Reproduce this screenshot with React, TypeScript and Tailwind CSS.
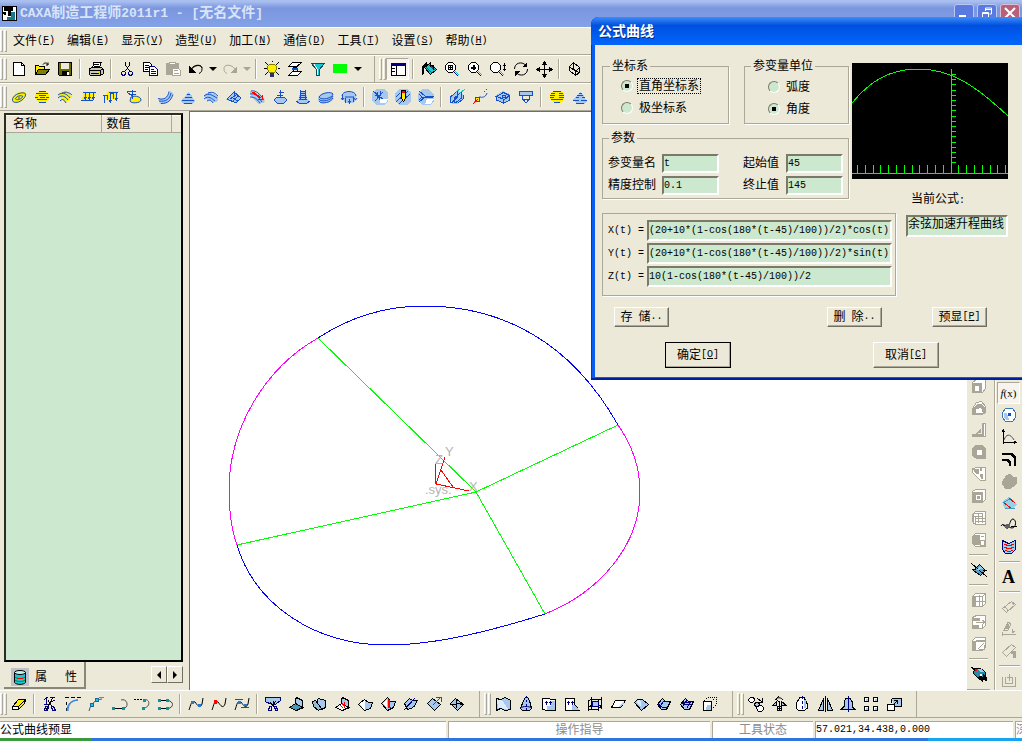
import { Fragment } from "react";
import type { ReactNode } from "react";
import clsx from "clsx";

// [path, stroke, fill] on a 16x16 grid
type Shape = [string, string, string?];

const K = "#000000";
const B = "#1450cc";
const L = "#a6c8ee";
const Y = "#ffee00";
const N = "#000080";
const C = "#18c8d0";
const G = "#a9a698";
const R = "#ff0000";
const W = "#ffffff";

const icons: Record<string, Shape[]> = {
    新建: [["M2.5 1.5h8l3 3v10h-11z", K, W], ["M10.5 1.5v3h3", K]],
    打开: [["M1.5 13.5v-9h3l1 1h5v3", K, Y], ["M1.5 13.5l3-5h11l-4 5z", K, "#808000"], ["M9 3.5c1-2 4-2 5 0m0-2v2.500h-2", K]],
    保存: [["M1.500 1.500h13v13h-12l-1-1z", K, "#6b6b00"], ["M4 2h8v6h-8z", "", "#ece9d8"], ["M5 10h7v4h-7z", "", K], ["M10 11h1.500v3h-1.500z", "", W]],
    打印: [["M4.500 6.500l1.500-5h7l-1.500 5z", K, W], ["M1.500 7.500l3-1h9l2 2v4l-3 2h-10l-1-1z", K, "#c8c6b8"], ["M6 3.500h5M5.500 5.500h5M1.500 9.500h11l3-2M12.500 10v4M3 12.500h8", K], ["M9 11h2v1h-2z", "", Y]],
    剪切: [["M6.500 1v3l4 6M10.500 1v3l-4 6", K], ["M3.500 10.500h2l1 1v1l-1 2h-2l-1-2v-1zM10.500 10.500h2l1 1v1l-1 2h-2l-1-2v-1z", N]],
    复制: [["M1.500 1.500h6l2 2v7h-8z", K, W], ["M3 4.500h4M3 6.500h4M3 8.500h3", K], ["M7.500 5.500h5l3 3v6h-8z", N, W], ["M9 8.500h3M9 10.500h5M9 12.500h5", N]],
    粘贴: [["M1.500 2.500h12v11h-12z", G, G], ["M4.500 1.500h6v2h-6z", G, W], ["M7.500 7.500h6l2 2v5h-8z", G, W], ["M9 9.500h4M9 12.500h5", G]],
    撤消: [["M3 8.500c2-5 11-6 11-1c0 3-1 4-3 5M3 9c3-5 10-6 11-2", K], ["M1 5v7h7z", "", K]],
    重做: [["M13 8.500c-2-5-11-6-11-1c0 3 1 4 3 5", G], ["M15 5v7h-7z", "", G]],
    亮度: [["M1 1l3 3M15 1l-3 3M0 7.500h2.500M13.500 7.500h2.500M1 14l3-3M15 14l-3-3M8 0v1", K], ["M5.500 3.500h5l2 2v3l-2 3h-5l-2-3v-3z", "#808000", Y], ["M6 12h4v4h-4z", "", "#303060"]],
    图层: [["M5.500 1.500h9l-4 4h-9zM5.500 10.500h9l-4 4h-9z", K, W], ["M12 3l-7 8M5 5l6 5", K], ["M5 7h6v1.500h-6z", "", B]],
    过滤: [["M1.500 2.500h13l-5 6v6h-3v-6z", "#104858", C], ["M4 3l3 5v6", W]],
    颜色: [["M0 3h14v9h-14z", "", "#00ff00"]],
    特征树: [["M1.500 2.500h14v12h-14z", K, W], ["M1 2h15v3h-15z", "", N], ["M6.500 5v9M2 7.500h3M2 10.500h3", K]],
    渲染: [["M1 5l5-4v2l-3 3v7l-2 1z", "", K], ["M3.500 6.500l5-4l7 6l-6 5z", K, C], ["M8 4l6 5M5 6l6 6", "#006080"], ["M9 1v5M12 4v5", K]],
    全部: [["M4.500 1.500h4l3 3v4l-3 3h-4l-3-3v-4z", K, W], ["M4 4.500h5M4 6.500h5M4 8.500h5M4.500 4v5M6.500 4v5M8.500 4v5", K], ["M10 11l4 4", N], ["M11 10l4 4", C]],
    放大: [["M4.500 1.500h4l3 3v4l-3 3h-4l-3-3v-4z", K, W], ["M4 6.500h5M6.500 4v5", K], ["M4 7.500h5M7.500 4v5", K], ["M10 11l4 4", N], ["M11 10l4 4", C]],
    缩放: [["M3.500 1.500h4l3 3v4l-3 3h-4l-3-3v-4z", K, W], ["M14.500 2v8M13 4.500h3M13 8.500h3", K], ["M9 11l4 4", N], ["M10 10l4 4", C]],
    旋转: [["M1.500 8c0-6 7-8 11-4M14.500 8c0 6-7 8-11 4", K], ["M14 1v5h-5zM2 15v-5h5z", "", K]],
    平移: [["M8.500 2v13M2 8.500h13", K], ["M8.500 0l3 4h-6zM8.500 17l3-4h-6zM0 8.500l4-3v6zM17 8.500l-4-3v6z", "", K]],
    视图: [["M2.500 5.500l4-4l6 5v5l-4 3l-6-5zM2.500 5.500l6 5v4M8.500 10.500l4-4M6.500 1.500v6l6 5", K]],
    // surface machining
    粗加工: [["M1 10c0-4 7-8 13-7c3 2-1 9-8 11c-3 0-5-1-5-4z", "", Y], ["M1.500 11c0-4 6-8 12-7c3 2-1 7-6 9c-4 1-6 0-6-2zM4.500 10c0-2 4-4 7-3c1 2-5 5-7 3zM7 9h2", B]],
    环切: [["M4 3h8l3 3v4l-3 3h-8l-3-3v-4z", "", Y], ["M5 2.500h7M2 4.500h12M5 6.500h7M1 8.500h3M6 8.500h5M12 8.500h3M3 10.500h10M5 13.500h7", B]],
    等高: [["M2 4l7-2l6 5l-3 5l-4 1l-6-5z", "", Y], ["M1 6c5-4 10 0 12 3M1 9c4-4 8-1 10 2M3 12c3-3 4-1 6 2M5 4c4-2 8 0 10 2", B]],
    平行: [["M4 4h12l-4 8h-11z", "", Y], ["M3 3.500h13M1 11.500h12M5.500 3v8M9.500 3v8M13.500 3v8M4 8l1.500 2l1.500-2M8 8l1.500 2l1.500-2M12 8l1.500 2l1.500-2", B]],
    插铣: [["M5 2h11l-3 8h-12z", "", Y], ["M1.500 14v-8h3v5M7.500 12v-8h3v6M13.500 11v-8M0 6.500h2M6 3.500h9M6 11l1.500 2l1.500-2M12 9l1.500 2l1.500-2", B]],
    清根: [["M5 8c5-2 10 0 10 3c0 3-10 4-11 1z", B, Y], ["M1 2.500h9M3 5.500h7M1 3l5 4v3M6.500 1v6", B]],
    导动: [["M1 9c5 2 10 0 12-7l3 2c-2 8-6 11-13 11z", "", L], ["M1 9.500c6 2 10-1 11-7M2 12c7 1 11-2 12-8M4 14.500c7 0 10-3 12-9", B]],
    山形: [["M8 3l4 4l3 5l-3 3h-8l-4-3l5-4z", "", L], ["M7 5.500h3M5 8.500h7M2 11.500h12M4 14.500h8", B]],
    波面: [["M1 6l5-3l9 4v5l-5 2l-8-5z", "", L], ["M1 7c5-4 9 0 13 2M1 10c5-4 8 0 11 2M4 12c4-2 4 0 6 2M5 4c5-2 8 1 10 3", B]],
    锥面: [["M8 2l7 7l-5 5l-10-3z", "", L], ["M8.500 2v4M1 10l9 4l5-5l-7-6zM4 10l6-4M7 12l5-5M5 8l7 4", B]],
    笔式: [["M1 2l9 3l6 8l-6 2l-8-7z", "", L], ["M2 2c5-1 9 3 13 9M1 5c5-1 8 2 12 8M1 8c5 0 7 2 10 6", B], ["M3 3l8 6M4 3l8 6M9 10h4v-4", R]],
    曲面: [["M3 9h9l3 2l-3 3h-8l-3-3z", "", L], ["M7 3.500h5M5 6.500h6M8.500 1v8M2 11l3-3h7l3 3l-3 3h-7z", B]],
    圆台: [["M5 2h6l1 8l3 2v1l-3 2h-8l-3-2v-1l3-2z", "", L], ["M5 2.500h6M5 4.500h6M5 6.500h6M4 8.500h8M4 10.500h8M5.500 1v9M10.500 1v9M1 12l3 2h8l3-2", B]],
    层切: [["M5 4h8l2 2v4l-5 4h-7l-3-2v-4z", "", L], ["M1 8c2-4 12-6 14-3c0 4-12 7-14 3zM1 10c2 4 13 1 14-3M1 12c2 4 13 1 14-3", B]],
    投影: [["M4 3h8l3 4v4l-2 3h-9l-2-4v-4z", "", L], ["M1 7c0-6 14-6 14 0M1.500 6v5M4.500 9v5M8.500 10v5M12.500 8v5M0 9l1.500 2l1.500-2M7 12l1.500 2l1.500-2M13 9l1.500 2l1.500-2M4 8h9", B]],
    仿真一: [["M4 0h8l4 4v8l-4 4h-8l-4-4v-8z", "", L], ["M1 2l12 10M3 12l8-9M5 3l1 5M9 2l-2 9M3 6h4", B], ["M8 10h8l-2 4h-6z", "", W]],
    仿真二: [["M4 0h8l4 4v8l-4 4h-8l-4-4v-8z", "", L], ["M1 13l12-11M4 15l11-10M1 8l4-4", B], ["M6.500 1.500h4v8l-2 3l-2-3z", K, Y], ["M7 2h3v2h-3z", "", R]],
    仿真三: [["M4 0h7l5 6v6l-4 4h-8l-4-4v-8z", "", L], ["M1 2l6 5h9M1 13l6-5M1 5l3 3l-3 3M3 8.500h12", B], ["M9 10h7l-3 5h-6z", "", W]],
    多轴一: [["M2 8l7-6l5 3v6l-6 4h-5z", "", L], ["M1.500 14v-6l7-6v6l-6 6M5.500 14v-5l7-6v6l-6 5M9 14l5-4v-4", B], ["M11 4l5-4M7 3l4-3", C]],
    多轴二: [["M2 13c4 0 3-5 6-5c4 1 6-1 7-4", B], ["M3 8h4v4h-4z", R, Y], ["M1 15l5-5M12 2h1M14 0h1", R]],
    多轴三: [["M1 6l7-4l7 3v5l-7 4l-7-4z", "", L], ["M1.500 7.500l7-4l6 3l-5 4zM1.500 7v4l7 3v-4M14.500 7v4l-5 3M7 6.500h3v2h-3z", B]],
    多轴四: [["M1.500 2.500h13v4h-13z", B, L], ["M4.500 6v4h7v-4M5 10l2 3h2l2-3", B]],
    刀路一: [["M4 2h8l3 3v5l-4 4h-6l-4-4v-5z", "", Y], ["M4 2.500h8M2 4.500h4M10 4.500h4M1 6.500h5M10 6.500h5M1 8.500h4M10 8.500h5M2 10.500h12M5 13.500h6", B]],
    刀路二: [["M8 3l4 4l3 5l-3 3h-7l-4-4z", "", L], ["M7 4.500h3M5 6.500h6M4 8.500h3M10 8.500h3M1 11.500h6M9 11.500h6M4 14.500h8", B]],
    // curves
    橡皮: [["M1.500 10.500l6-7h7l-1 4l-6 6h-6z", K, Y], ["M1.500 10.500h6l7-7M7.500 10.500v3", K], ["M2 11h5v2h-5z", "", W]],
    裁剪: [["M4 14l7-13M6 4l4 7M2 4l4-3", K], ["M8 1.500h5M2 8.500h4M9 6l4-2", N], ["M3.500 10.500h3l-1 4h-3zM9.500 10.500h2l2 4h-3zM4.500 2v7", N]],
    过渡: [["M0 1.500h4M6 1.500h4M12 1.500h4M1.500 15v-3M1.500 9v-3", K], ["M2 15c0-7 4-11 11-11M3 15c0-6 3-10 10-11", "#2878d0"]],
    打断: [["M1 15c2-8 6-11 13-12", "#505050"], ["M2.500 7.500h3v3h-3zM7.500 2.500h3v3h-3z", "#1868a8", C], ["M11 1.500h5", "#808080"]],
    组合: [["M2 12.500h11", K], ["M10 4c6-2 8 6 4 8", "#505050"], ["M1 11h3v3h-3zM11 11h3v3h-3z", "", "#109098"]],
    拉伸: [["M0 3.500h2M3 3.500h2M6 3.500h2", K], ["M10 4c6-2 7 7 0 8", "#505050"], ["M9 3h3v3h-3zM8 11h3v3h-3z", "", "#109098"]],
    优化: [["M2 4.500h9M2 12.500h9", K], ["M11 4.500c6 1 6 7 0 8", "#404040"], ["M1 3h3v3h-3zM9 3h3v3h-3zM1 11h3v3h-3zM9 11h3v3h-3z", "", "#109098"]],
    样条一: [["M1 14c2-5 2-10 6-8c3 4 5 7 7 2l1-6", K], ["M3 5h3v3h-3zM10 8h3v3h-3z", "", "#2878d0"]],
    样条二: [["M1 14c2-5 2-10 6-8c3 4 5 7 7 2l1-6", K], ["M3 4h3v4h-3z", "", R]],
    样条三: [["M1 14c2-5 2-10 6-8c3 4 5 7 7 2l1-6", K], ["M1 3.500h8M7 11.500h8", R], ["M4 5h3v3h-3zM10 8h3v2h-3z", "", "#2878d0"]],
    // surface editing
    面裁剪: [["M0 1h15v4l-4 3h-5l-5-2z", N, L], ["M5 6l5 5M11 5l-5 6M8 5v6", K], ["M4.500 10.500h2v4h-3zM9.500 10.500h2l1 4h-2z", N]],
    面过渡: [["M8.500 1.500l6 3v8l-7-4v-5z", K, L], ["M1.500 11.500l6-4l7 4l-6 3z", K, "#4898b8"]],
    面缝合: [["M7.500 2.500l7 2v7l-4 2l-4-4v-6z", K, L], ["M1.500 5.500l3-1l6 8l-3 2l-5-4z", K, "#8cc0d8"]],
    面拼接: [["M8.500 1.500l6 3v8l-7-4v-5z", K, L], ["M1.500 11.500l6-4l7 4l-6 3z", K, W], ["M6 9l3 3M8 7l3 4M10 6v6", R]],
    面延伸: [["M1.500 8.500l6-5l4 3h4l-2 6l-6 2z", K, L], ["M2.500 8l5-4v10z", "", W]],
    面优化: [["M1.500 7.500l6-6l3 4h5l-2 6l-6 3z", K, L], ["M3 7l4-4v9z", "", W], ["M8 3v8h3M9 4v7", R]],
    面重拟: [["M1.500 7.500l5-5l3 2h5l-4 7l-6 2z", K, L], ["M1 14l11-12", N]],
    面炸开: [["M1.500 7.500l5-5l8 6l-6 6z", K, L], ["M7 9l7-7M10 1.500h5v4", R]],
    面变换: [["M1.500 7.500l5-5l8 6l-6 6z", K, L], ["M4 9l8-2M7 3l1 9M1 8h4M11 8h4", K]],
    直纹面: [["M1.500 2.500l4 1l5-2l5 3v9l-5 1l-5-2l-4 2z", K, L], ["M2 4h5l6 9l-10-1z", "", "#dcecf8"]],
    旋转面: [["M5.500 4.500l2-3h2l2 3l2 8l-2 2h-7l-2-2z", K, L], ["M8.500 0v2M8.500 4v2M8.500 8v2M8.500 12v2", N], ["M2 12c4-2 8-2 12 0", N]],
    扫描面: [["M1.500 2.500h6l3 1h4v11h-8l-5-1z", K, W], ["M10 5h4v9h-4zM6 10h4v4h-4z", "", L], ["M5.500 5v4M9.500 5v4M4 6.500h3M8 6.500h3", N]],
    导动面: [["M1.500 2.500h9v6l5 6h-14z", K, W], ["M8 9h3l4 5h-7z", "", L], ["M4.500 5v4M8.500 5v4M3 6.500h3M7 6.500h3", N]],
    等距面: [["M4.500 1v12M14.500 1v12M1.500 4v11M11.500 4v11M1 12l4-3h9M1.500 5l3-2h10M11 13l4-3M1 13.500h10", K], ["M5 5h6v5h-6z", N, L]],
    平面: [["M1.500 11.500l4-7h10l-5 7z", K, W], ["M9 11l5-6v2l-4 4z", "", L]],
    边界面: [["M1.500 6.500l3-3h5l6 5l-7 6z", K, L], ["M3 6l2-2l3 1v5z", "", "#dcecf8"]],
    放样面: [["M1.500 8.500l5-6l3 3h5l-4 8h-5z", K, L], ["M4 10l4-5h5M2 8l4 3h6", N]],
    网格面: [["M1.500 8.500l5-6l3 3h5l-4 8h-5z", K, L], ["M4 10l4-6M8 12l4-7M2 7l4 1l7 1M4 6h8", N]],
    实体面: [["M1.500 5.500h8v9h-8z", K, W], ["M5 9h4v5h-5z", "", L], ["M2 4.500h1M4 2.500h1M6 1.500h1M8 1.500h1M10 1.500h1M12 1.500h1M14 1.500h1M14.500 3v1M14.500 5v1M14.500 7v1M13.500 9v1M11 11.500h1M11 3.500h1", K]],
    // transforms
    移动: [["M2.500 1.500h3l1 2v1l-2 2h-2l-2-2v-1zM9.500 9.500h4l2 2v2l-2 2h-3l-2-3z", K, W], ["M9 2l5 4M14.500 2v4h-4", K], ["M7.500 6.500h3l1 2l-1 2h-3l-1-2z", K, L]],
    平面旋转: [["M1.500 9.500l4-4v4zM15.500 9.500l-5-4v4z", K, L], ["M4 4c2-3 6-3 8 0M8 0l-3 3l3 3", K], ["M8.500 5v10M6 12.500h5M6.500 10.500h4v4h-4z", K]],
    空间旋转: [["M6 1.500h4l3 6v5l-3 2h-5l-3-2v-5z", K, W], ["M10 4h2v8h-2z", "", L], ["M8.500 0v3M8.500 5v3M8.500 10v3", N]],
    平面镜像: [["M1.500 14.500l5-12v12zM15.500 14.500l-5-12v12z", K, L], ["M8.500 0v16", K]],
    空间镜像: [["M1 13.500l3-3v-5l2-3h4l2 3v5l3 3z", K, L], ["M8.500 0v16", N]],
    阵列: [["M1.500 1.500h4v4h-4zM10.500 1.500h4v4h-4zM1.500 10.500h4v4h-4zM10.500 10.500h4v4h-4z", K, W], ["M3 3h2v2h-2zM12 3h2v2h-2zM3 12h2v2h-2zM12 12h2v2h-2z", "", L]],
    缩放变换: [["M5.500 2.500h10v8h-7M5.500 2.500v4", K, L], ["M1.500 8.500h7v6h-7z", K, W], ["M7 9l4-4M8 4.500h3v3", K]],
    // solid features
    拉伸增料: [["M1.500 4.500l4-3h9v9l-3 4h-10z", G, W], ["M2 5h9v9h-9z", "", G], ["M4 8h4v5h-4z", "", W]],
    旋转增料: [["M1.500 8.500l4-6l5-1l4 5v6l-3 2h-10z", G, W], ["M2 9l4-5h4l4 4v6h-12z", "", G], ["M5 9l5-1l2 5h-7z", "", W]],
    放样增料: [["M1.500 14.500l10-2v-11h3v13z", G, W], ["M4 12l6-6v5zM1 12h10v-10h2v12h-12z", "", G]],
    导动增料: [["M1.500 4.500l3-3h7l3 3v10h-9l-4-3z", G, G], ["M6 6h5v5h-5z", "", W]],
    拉伸除料: [["M1.500 2.500l5-1h8v13h-5l-8-8z", G, W], ["M2 3h6v5h-3zM9 8h3v5h-2zM9 2h2v3h-2z", "", G]],
    旋转除料: [["M1.500 3.500l3-2h10v10l-3 3h-10z", G, W], ["M2 4h10v10h-10z", "", G], ["M5 7h5v5h-5z", "", W], ["M6 8h3v3h-3z", "", G]],
    放样除料: [["M1.500 4.500l3-3h10v13h-10l-3-3z", G, W], ["M2 3h9v3h-9zM2 6h2v7h-2zM5 8.500h9M5 11.500h9M7 4v9M11 4v9", G]],
    导动除料: [["M1.500 4.500l3-3h10v13h-10l-3-3z", G, W], ["M2 3h7v10h-7z", "", G], ["M9 8h4v5h-4zM5 5h3M10 4h3M5 9h5", G]],
    曲面加厚: [["M2.500 8.500l6-6l6 6l-5 5z", K, "#58a0c8"], ["M0 1l16 14M1 7h4M12 8h4", K], ["M5 8l4-4l4 3z", "", "#9cd0e8"]],
    过渡特征: [["M1.500 4.500l3-3h10v10l-3 3h-10z", G, W], ["M2 5h3v9h-3z", "", G], ["M1.500 4.500h10v10M11.500 4.500l3-3M8.500 3v11M4 9.500h10", G]],
    抽壳: [["M1.500 3.500l4-2h9v10l-3 3h-10z", G, W], ["M2 4h7v3h-7zM2 11h6v3h-6z", "", G], ["M5 8.500h9M11 6l3 2l-3 3M11.500 10v4", G]],
    拔模: [["M1.500 4.500l3-3h10v10l-3 3h-10z", G, W], ["M2 5h3v9h-3zM5 4h9v2h-9z", "", G], ["M7 13l6-6M8 13.500h5v-5", G]],
    模具: [["M0 1l4 3", K], ["M3.500 2.500h6l5 4v7h-6l-6-6z", K, "#2888a8"], ["M6 3h4l4 3h-4z", "", "#9cd0e8"], ["M4 3h2v2h-2z", "", R], ["M9 9l3 2v-3l4 4v3l-4-1v2l-5-4z", "", K], ["M9 8h2v2h-2z", "", W]],
    正多边形: [["M4.500 1.500h7l3 4v5l-3 4h-7l-3-4v-5z", "#3878b8", W], ["M3 6h3l2 7h-3l-2-3z", "", L], ["M7 6h3v3h-3z", "", B]],
    二次曲线: [["M2.500 14.500v-13M1 3l1.500-2l1.500 2M2 13.500h13M13 12l2 1.500l-2 1.500", K], ["M3 11c2-6 6-7 10 0", "#505050"]],
    等距线: [["M1 3.500h9l3 3v8M1 2.500h10l3 3v9", K], ["M1 8.500h6l2 2v4M1 9.500h5l2 2v3", K]],
    曲线投影: [["M5 3l4-2l3 3h3v7l-5 4h-6l-3-5z", G, G]],
    相关线: [["M1 7l7-5l8 7l-4 5h-8z", "", "#98d0e8"], ["M2 8l8-5M4 13h10", "#4898b8"], ["M8 3l6 5M3 8l7 5", R]],
    样条转圆弧: [["M0 9c3-5 4 4 7 2c2-3 2-9 5-9c4 1 3 9-1 9c-3 0-5-3-9-3", K], ["M5 7h4v4h-4z", "", "#606060"], ["M10 9h6", K]],
    线面映射: [["M1.500 1.500l6 3l7-3v9l-4 4h-6l-3-4z", N, "#98d0f0"], ["M3 5l5 2l5-2M3 8l5 2l5-2M4 11l4 2l4-2", R]],
    尺寸标注: [["M1.500 9.500l9-7l4 3l-9 8zM4 7l3 5M10 2l4 5", G]],
    尺寸编辑: [["M3 9l4-8l3 2l-3 6zM1 13.500h14M1.500 11v4M11 8v4l3-2M2 9h4", G], ["M5 3h3v5h-4z", "", G]],
    尺寸驱动: [["M1.500 9.500l9-8l4 3l-9 9z", G], ["M10 8h5v7h-3v-4h-2z", "", G]],
    检查: [["M1.500 4v9h13v-9M4.500 4v6h7v-6M8.500 1v7M6 4.500h5", G]],
};

// curves look better smoothed, straight edges stay on the pixel grid
function Icon({ name }: { name: string }) {
    return (
        <svg viewBox="0 0 16 16" className="size-4 overflow-visible" aria-hidden="true">
            {icons[name].map(([d, stroke, fill], i) => (
                <path
                    key={i}
                    d={d}
                    stroke={stroke || "none"}
                    fill={fill ?? "none"}
                    shapeRendering={d.includes("c") ? "auto" : "crispEdges"}
                />
            ))}
        </svg>
    );
}

function ToolButton({ name, pressed, children }: { name: string; pressed?: boolean; children?: ReactNode }) {
    return (
        <button
            type="button"
            aria-label={name}
            className={clsx(
                "flex h-[22px] w-[23px] shrink-0 items-center justify-center",
                pressed && "border border-t-[#aca899] border-l-[#aca899] border-r-white border-b-white bg-[#f6f4ec]",
            )}
        >
            {children ?? <Icon name={name} />}
        </button>
    );
}

function Caret({ disabled }: { disabled?: boolean }) {
    return (
        <button type="button" aria-label="展开" disabled={disabled} className="flex h-[22px] w-[11px] shrink-0 items-center justify-center">
            <svg viewBox="0 0 8 4" className="h-1 w-2">
                <path d="M0 0h8l-4 4z" fill={disabled ? "#a9a698" : "#000"} />
            </svg>
        </button>
    );
}

function Separator() {
    return (
        <div className="flex h-5 w-2 shrink-0 justify-center">
            <div className="w-0.5 border-l border-r border-l-[#aca899] border-r-white" />
        </div>
    );
}

function Grip() {
    return (
        <div className="flex h-[22px] w-[7px] shrink-0 gap-px">
            <div className="w-[3px] border border-white border-r-[#aca899] border-b-[#aca899]" />
            <div className="w-[3px] border border-white border-r-[#aca899] border-b-[#aca899]" />
        </div>
    );
}

// "|" in the list stands for a separator
function Tools({ names }: { names: string }) {
    return names.split(" ").map((name, i) => (
        <Fragment key={i}>{name === "|" ? <Separator /> : <ToolButton name={name} />}</Fragment>
    ));
}

function ToolBar({ children }: { children: ReactNode }) {
    return (
        <div className="flex h-7 shrink-0 items-center overflow-hidden border-t border-b border-t-white border-b-[#aca899]">
            {children}
        </div>
    );
}

const groupEnd = "mr-1 flex h-full items-center border-r border-[#aca899] pr-[11px]";

const menus = [
    ["文件", "F"],
    ["编辑", "E"],
    ["显示", "V"],
    ["造型", "U"],
    ["加工", "N"],
    ["通信", "D"],
    ["工具", "T"],
    ["设置", "S"],
    ["帮助", "H"],
];

function TitleBar() {
    return (
        <header className="flex h-[27px] shrink-0 items-center bg-linear-to-b from-[#a9bff0] from-5% via-[#7b96df] via-30% to-[#84a2e8] pl-0.5">
            <svg viewBox="0 0 15 15" className="size-[15px]" shapeRendering="crispEdges" aria-hidden="true">
                <path d="M0 0h15v15h-15z" fill="#000" />
                <path d="M1 1h13v13h-13z" fill="#fff" />
                <path d="M2 1h9v4h-2v5h-3v-5h-4z" fill="#000" />
                <path d="M9 6h4v8h-8v-3h4z" fill="#187890" />
                <path d="M1 6h3v3h-2z" fill="#000" />
            </svg>
            <h1 className="ml-[3px] flex-1 font-mono text-[13px] leading-4 font-bold whitespace-pre text-[#d8e4f8]">
                CAXA<span className="text-sm leading-4">制造工程师</span>2011r1 - [<span className="text-sm leading-4">无名文件</span>]
            </h1>
            <div className="mr-0.5 flex gap-[3px] text-white">
                <button type="button" aria-label="最小化" className="h-5 w-5 rounded-[3px] border border-[#b8c8f0] bg-[#5a7ae0]">
                    <svg viewBox="0 0 18 18" className="size-[18px]"><path d="M4 10h7v3h-7z" fill="#fff" /></svg>
                </button>
                <button type="button" aria-label="还原" className="h-5 w-5 rounded-[3px] border border-[#b8c8f0] bg-[#5a7ae0]">
                    <svg viewBox="0 0 18 18" className="size-[18px]" fill="none" stroke="#fff"><path d="M7.500 6v-3h6v6h-2M7 4.500h7M4.500 7.500h6v6h-6zM4 8.500h7" /></svg>
                </button>
                <button type="button" aria-label="关闭" className="h-5 w-5 rounded-[3px] border border-[#d8c0d0] bg-[#b8607a]">
                    <svg viewBox="0 0 18 18" className="size-[18px]" stroke="#fff" strokeWidth="2"><path d="M4 3l10 10M14 3l-10 10" /></svg>
                </button>
            </div>
        </header>
    );
}

function MenuBar() {
    return (
        <nav className="flex h-7 shrink-0 items-center border-t border-b border-t-white border-b-[#aca899] text-xs">
            <Grip />
            <div className="ml-1.5 flex gap-3">
                {menus.map(([label, key]) => (
                    <button key={key} type="button" className="flex items-center whitespace-nowrap">
                        {label}
                        <span className="font-mono text-[10px]">
                            (<u>{key}</u>)
                        </span>
                    </button>
                ))}
            </div>
        </nav>
    );
}

function PropertyPanel() {
    return (
        <aside className="flex w-[189px] shrink-0 flex-col overflow-hidden pt-0.5 pr-1.5 pl-1">
            <div className="flex flex-1 flex-col border-2 border-[#2c2b24] border-r-black border-b-black">
                <table className="w-full border-collapse bg-[#ece9d8] text-xs leading-4">
                    <thead>
                        <tr className="border-t border-b border-t-white border-b-[#aca899]">
                            <th className="w-[95px] border-r border-[#aca899] pl-[7px] text-left font-normal">名称</th>
                            <th className="w-[70px] border-r border-[#aca899] pl-[5px] text-left font-normal">数值</th>
                            <th />
                        </tr>
                    </thead>
                </table>
                <div className="flex-1 bg-[#cce8cf]" />
            </div>
            <div className="flex h-7 items-start justify-between">
                <button type="button" className="flex h-[27px] w-[82px] items-center border-r-2 border-b-2 border-[#8a8776] pt-1 pl-[7px] text-xs">
                    <span className="bg-[#c0c0c8] p-px">
                        <svg viewBox="0 0 16 16" className="size-4" aria-hidden="true">
                            <path d="M2.500 3.500v10c2 2.500 9 2.500 11 0v-10" fill={C} stroke={K} />
                            <ellipse cx="8" cy="3.500" rx="5.500" ry="2" fill="#c8f0f0" stroke={K} />
                            <path d="M3 8c2 2 8 2 10 0M3 11c2 2 8 2 10 0" fill="none" stroke="#108030" />
                            <path d="M5 9.500h6" stroke={R} />
                        </svg>
                    </span>
                    <span className="ml-1.5">属</span>
                    <span className="ml-4.5">性</span>
                </button>
                <div className="mt-1 flex">
                    <button type="button" aria-label="向左" className="flex h-[17px] w-4 items-center justify-center border border-white border-r-[#716f64] border-b-[#716f64]">
                        <svg viewBox="0 0 4 8" className="h-2 w-1"><path d="M4 0v8l-4-4z" /></svg>
                    </button>
                    <button type="button" aria-label="向右" className="flex h-[17px] w-4 items-center justify-center border border-white border-r-[#716f64] border-b-[#716f64]">
                        <svg viewBox="0 0 4 8" className="h-2 w-1"><path d="M0 0v8l4-4z" /></svg>
                    </button>
                </div>
            </div>
        </aside>
    );
}

function Drawing() {
    return (
        <div className="min-w-0 flex-1 border-t border-l border-[#716f64] bg-white">
            <svg className="h-full w-full" fill="none" shapeRendering="crispEdges" role="img" aria-label="凸轮轮廓">
                <g transform="translate(-190 -112)">
                    <g stroke="#0000ff">
                        <path d="M618 425C570 340 500 306 424 306C385 306 350 317 318 338" />
                        <path d="M237 545C255 605 315 645 387 645C440 645 500 628 545 614" />
                    </g>
                    <g stroke="#ff00ff">
                        <path d="M318 338C265 368 229 428 229 490C229 510 231 528 237 545" />
                        <path d="M545 614C600 592 640 545 640 492C640 467 632 445 618 425" />
                    </g>
                    <path d="M318 338L476 492L618 425M237 545L476 492L545 614" stroke="#00ff00" />
                    <path d="M445 457L436 484L469 491M435 464L436 484M441 470L453 487" stroke="#ff0000" />
                    <g fill="#b4b4b4" fontFamily="Liberation Sans">
                        <text x="445" y="456" fontSize="13">Y</text>
                        <text x="435" y="464" fontSize="13">Z</text>
                        <text x="469" y="491" fontSize="13">X</text>
                        <text x="425" y="494" fontSize="13">.sys.</text>
                    </g>
                </g>
            </svg>
        </div>
    );
}

function SideRule() {
    return (
        <div className="flex h-2 shrink-0 flex-col justify-center px-0.5">
            <div className="h-0.5 border-t border-b border-t-[#aca899] border-b-white" />
        </div>
    );
}

const solidTools = ["拉伸增料", "旋转增料", "放样增料", "导动增料", "拉伸除料", "旋转除料", "放样除料", "导动除料"];
const curveTools = ["正多边形", "二次曲线", "等距线", "曲线投影", "相关线", "样条转圆弧", "线面映射"];

function SideBars() {
    return (
        <div className="flex shrink-0">
            <div className="flex w-[28px] flex-col items-stretch justify-end overflow-hidden border-r border-[#aca899] pr-1">
                {solidTools.map((name) => <ToolButton key={name} name={name} />)}
                <SideRule />
                <ToolButton name="曲面加厚" />
                <SideRule />
                <ToolButton name="过渡特征" />
                <ToolButton name="抽壳" />
                <ToolButton name="拔模" />
                <SideRule />
                <ToolButton name="模具" />
                <div className="h-[5px] border-b border-[#aca899]" />
            </div>
            <div className="flex w-[27px] flex-col items-stretch justify-end overflow-hidden border-l border-white pl-px">
                <ToolButton name="公式曲线" pressed>
                    <span className="font-serif text-[11px] leading-4"><i>f</i>(x)</span>
                </ToolButton>
                {curveTools.map((name) => <ToolButton key={name} name={name} />)}
                <SideRule />
                <ToolButton name="文字">
                    <span className="font-serif text-lg leading-5 font-bold">A</span>
                </ToolButton>
                <SideRule />
                <ToolButton name="尺寸标注" />
                <ToolButton name="尺寸编辑" />
                <ToolButton name="尺寸驱动" />
                <SideRule />
                <div className="h-5">
                    <ToolButton name="检查" />
                </div>
            </div>
        </div>
    );
}

const sunken = "border-2 border-t-[#7c7968] border-l-[#7c7968] border-r-white border-b-white bg-[#cce8cf]";
const raised = "flex items-center justify-center border border-white border-r-[#716f64] border-b-[#716f64] bg-[#ece9d8] whitespace-pre shadow-[inset_-1px_-1px_0_#aca899]";
const groupBox = "border border-[#aca899] shadow-[1px_1px_0_#fff]";

function Radio({ name, label, checked, focused }: { name: string; label: string; checked?: boolean; focused?: boolean }) {
    return (
        <label className="flex h-[22px] items-center gap-1">
            <input
                type="radio"
                name={name}
                defaultChecked={checked}
                className="size-3 appearance-none rounded-full border border-t-[#7c7968] border-l-[#7c7968] border-r-white border-b-white bg-[#cce8cf] checked:bg-radial checked:from-black checked:from-30% checked:to-[#cce8cf] checked:to-35%"
            />
            <span className={clsx("border border-dotted px-px leading-3.5", focused ? "border-black" : "border-transparent")}>{label}</span>
        </label>
    );
}

function Param({ id, label, value, labelWidth }: { id: string; label: string; value: string; labelWidth: string }) {
    return (
        <div className="flex h-[22px] items-center">
            <label htmlFor={id} className={labelWidth}>{label}</label>
            <input id={id} defaultValue={value} className={clsx("h-[19px] w-[57px] font-mono text-[10px]", sunken)} />
        </div>
    );
}

const formulas = [
    ["X", "(20+10*(1-cos(180*(t-45)/100))/2)*cos(t)"],
    ["Y", "(20+10*(1-cos(180*(t-45)/100))/2)*sin(t)"],
    ["Z", "10(1-cos(180*(t-45)/100))/2"],
];

function Preview() {
    const xTicks = Array.from({ length: 20 }, (_, i) => 5 + Math.round(i * 7.8));
    const yTicks = Array.from({ length: 18 }, (_, i) => 11 + Math.round(i * 5.2));
    return (
        <svg viewBox="0 0 156 116" className="h-[116px] w-[156px] bg-black" fill="none" stroke="#00ff00" shapeRendering="crispEdges" role="img" aria-label="曲线预显">
            <path d="M0 40C18 18 38 6 66 6C100 6 125 24 156 53M0 110.500h156M99.500 6v104" />
            {xTicks.map((x) => <path key={x} d={`M${x + 0.5} 102v8`} />)}
            {yTicks.map((y) => <path key={y} d={`M100 ${y + 0.5}h4`} />)}
        </svg>
    );
}

function FormulaDialog() {
    return (
        <section role="dialog" aria-label="公式曲线" className="absolute top-[17px] right-0 w-[431px] overflow-hidden rounded-tl-lg bg-[#0a5cf0] pb-[3px] pl-1 shadow-[inset_0_-2px_0_#001ea0,inset_1px_0_0_#0831d9] select-none">
            <h2 className="-ml-1 flex h-7 items-center bg-linear-to-b from-[#3c8cf8] via-[#0050e0] via-30% to-[#0266fc] pl-[7px] text-sm font-bold text-white [text-shadow:1px_1px_0_#0a2a80]">
                公式曲线
            </h2>
            <form className="bg-[#ece9d8] pt-[15px] pb-[9px] pl-[7px] text-xs leading-3">
                <div className="flex gap-[3px]">
                    <div className="flex w-[247px] flex-col justify-start gap-2">
                        <div className="flex justify-between">
                            <fieldset className={clsx("h-16 w-[127px] pl-[18px]", groupBox)}>
                                <legend className="-ml-[11px] px-0.5">坐标系</legend>
                                <div className="pt-[3px]">
                                    <Radio name="axis" label="直角坐标系" checked focused />
                                    <Radio name="axis" label="极坐标系" />
                                </div>
                            </fieldset>
                            <fieldset className={clsx("h-16 w-[105px] pl-[23px]", groupBox)}>
                                <legend className="-ml-[17px] px-0.5">参变量单位</legend>
                                <div className="pt-1">
                                    <Radio name="unit" label="弧度" />
                                    <Radio name="unit" label="角度" checked />
                                </div>
                            </fieldset>
                        </div>
                        <fieldset className={clsx("h-[67px] px-[5px]", groupBox)}>
                            <legend className="ml-px px-0.5">参数</legend>
                            <div className="flex justify-between pt-2">
                                <div>
                                    <Param id="name" label="参变量名" value="t" labelWidth="w-[54px]" />
                                    <Param id="precision" label="精度控制" value="0.1" labelWidth="w-[54px]" />
                                </div>
                                <div>
                                    <Param id="start" label="起始值" value="45" labelWidth="w-[43px]" />
                                    <Param id="end" label="终止值" value="145" labelWidth="w-[43px]" />
                                </div>
                            </div>
                        </fieldset>
                    </div>
                    <div className="flex flex-col items-center pt-[3px]">
                        <Preview />
                        <label htmlFor="formula" className="mt-3.5 mb-1.5 pl-4">
                            当前公式<span className="font-mono text-[10px]">:</span>
                        </label>
                    </div>
                </div>
                <div className="flex items-start gap-2.5">
                    <div className={clsx("flex h-[83px] w-[294px] flex-col gap-0.5 pt-1.5 pl-[5px]", groupBox)}>
                        {formulas.map(([axis, value]) => (
                            <div key={axis} className="flex items-center">
                                <label htmlFor={axis} className="w-[39px] font-mono text-[10px] whitespace-pre">{axis}(t) =</label>
                                <input id={axis} defaultValue={value} className={clsx("h-[21px] w-[245px] font-mono text-[10px]", sunken)} />
                            </div>
                        ))}
                    </div>
                    <input id="formula" defaultValue="余弦加速升程曲线" className={clsx("mt-0.5 h-[22px] w-[102px] pb-2 text-xs", sunken)} />
                </div>
                <div className="mt-[11px] ml-3 flex">
                    <button type="button" className={clsx("mr-[158px] h-5 w-[55px]", raised)}>
                        存<span className="font-mono text-[10px]"> </span>储<span className="font-mono text-[10px]">..</span>
                    </button>
                    <button type="button" className={clsx("mr-[50px] h-5 w-[55px]", raised)}>
                        删<span className="font-mono text-[10px]"> </span>除<span className="font-mono text-[10px]">..</span>
                    </button>
                    <button type="button" className={clsx("h-5 w-[55px]", raised)}>
                        预显<span className="font-mono text-[10px]">[<u>P</u>]</span>
                    </button>
                </div>
                <div className="mt-[15px] ml-[63px] flex gap-[142px]">
                    <button type="button" className={clsx("h-[26px] w-[66px] outline outline-black -outline-offset-1", raised)}>
                        确定<span className="font-mono text-[10px]">[<u>O</u>]</span>
                    </button>
                    <button type="button" className={clsx("h-[26px] w-[66px]", raised)}>
                        取消<span className="font-mono text-[10px]">[<u>C</u>]</span>
                    </button>
                </div>
            </form>
        </section>
    );
}

const pane = "flex items-center overflow-hidden border-t border-l border-[#aca899] bg-white";

function StatusBar() {
    return (
        <footer className="flex h-5 shrink-0 gap-0.5 bg-[#ece9d8] pt-[3px] text-xs leading-4 whitespace-nowrap">
            <div className="flex w-[446px] items-center overflow-hidden border-t border-[#aca899] bg-white">公式曲线预显</div>
            <div className={clsx("min-w-0 flex-1 justify-center text-[#8c8c8c]", pane)}>操作指导</div>
            <div className={clsx("w-[101px] justify-center text-[#8c8c8c]", pane)}>工具状态</div>
            <div className={clsx("w-[198px] font-mono text-[10px]", pane)}>57.021,34.438,0.000</div>
            <div className={clsx("w-[7px] text-[#8c8c8c]", pane)}>深</div>
        </footer>
    );
}

export default function App() {
    return (
        <div className="relative flex h-screen w-full flex-col overflow-hidden bg-[#ece9d8] font-['Liberation_Sans','Noto_Sans_CJK_SC',sans-serif] text-black [&_.font-mono]:font-['Liberation_Mono','Noto_Sans_CJK_SC',monospace] [&_.font-serif]:font-['Liberation_Serif',serif]">
            <TitleBar />
            <MenuBar />
            <ToolBar>
                <Grip />
                <div className={groupEnd}>
                    <Tools names="新建 打开 保存 | 打印 | 剪切 复制 粘贴 撤消" />
                    <Caret />
                    <Tools names="重做" />
                    <Caret disabled />
                    <Tools names="| 亮度 图层 过滤 颜色" />
                    <Caret />
                </div>
                <Grip />
                <ToolButton name="特征树" pressed />
                <Tools names="| 渲染 全部 放大 缩放 旋转 平移 | 视图" />
            </ToolBar>
            <ToolBar>
                <Grip />
                <Tools names="粗加工 环切 等高 平行 插铣 清根 | 导动 山形 波面 锥面 笔式 曲面 圆台 层切 投影 | 仿真一 仿真二 仿真三 | 多轴一 多轴二 多轴三 多轴四 | 刀路一 刀路二" />
            </ToolBar>
            <main className="flex min-h-0 flex-1">
                <PropertyPanel />
                <Drawing />
                <SideBars />
            </main>
            <ToolBar>
                <Grip />
                <div className={groupEnd}>
                    <Tools names="橡皮 | 裁剪 过渡 打断 组合 拉伸 优化 | 样条一 样条二 样条三 | 面裁剪 面过渡 面缝合 面拼接 面延伸 面优化 面重拟 面炸开 面变换" />
                </div>
                <Grip />
                <div className={groupEnd}>
                    <Tools names="直纹面 旋转面 扫描面 导动面 等距面 平面 边界面 放样面 网格面 实体面" />
                </div>
                <Grip />
                <div className={groupEnd}>
                    <Tools names="移动 平面旋转 空间旋转 平面镜像 空间镜像 阵列 缩放变换" />
                </div>
            </ToolBar>
            <StatusBar />
            <div className="flex h-[3px] shrink-0">
                <div className="w-[92px] bg-[#3c9a3c]" />
                <div className="flex-1 bg-[#2f74e0]" />
                <div className="w-[94px] bg-[#18a4f0]" />
            </div>
            <FormulaDialog />
        </div>
    );
}
